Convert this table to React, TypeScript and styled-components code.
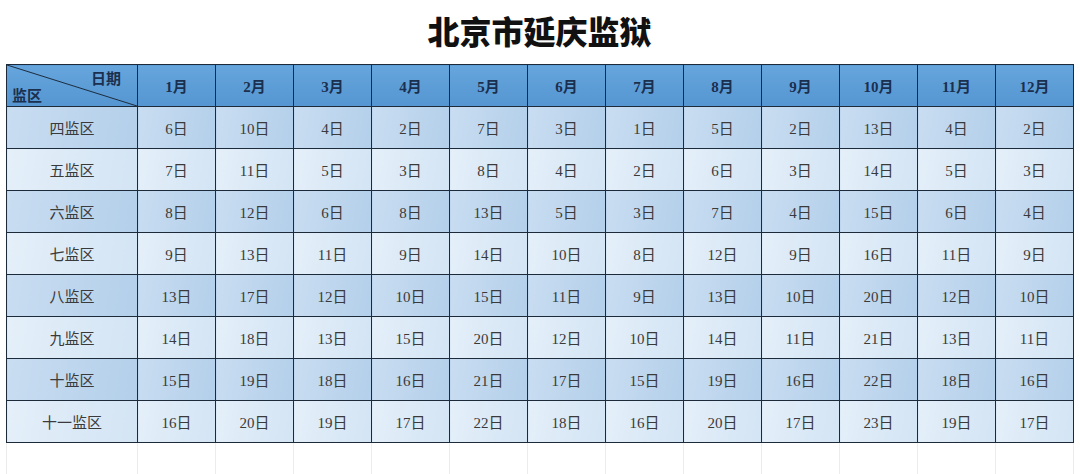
import React from "react";
import styled, { createGlobalStyle, css } from "styled-components";

const GlobalStyle = createGlobalStyle`
  html, body {
    margin: 0;
    padding: 0;
    background: #ffffff;
  }
  body {
    font-family: "Liberation Serif", "Noto Sans CJK SC", serif;
    color: #333;
  }
`;

const months = ["1月", "2月", "3月", "4月", "5月", "6月", "7月", "8月", "9月", "10月", "11月", "12月"];

const rows: { name: string; days: number[] }[] = [
  { name: "四监区", days: [6, 10, 4, 2, 7, 3, 1, 5, 2, 13, 4, 2] },
  { name: "五监区", days: [7, 11, 5, 3, 8, 4, 2, 6, 3, 14, 5, 3] },
  { name: "六监区", days: [8, 12, 6, 8, 13, 5, 3, 7, 4, 15, 6, 4] },
  { name: "七监区", days: [9, 13, 11, 9, 14, 10, 8, 12, 9, 16, 11, 9] },
  { name: "八监区", days: [13, 17, 12, 10, 15, 11, 9, 13, 10, 20, 12, 10] },
  { name: "九监区", days: [14, 18, 13, 15, 20, 12, 10, 14, 11, 21, 13, 11] },
  { name: "十监区", days: [15, 19, 18, 16, 21, 17, 15, 19, 16, 22, 18, 16] },
  { name: "十一监区", days: [16, 20, 19, 17, 22, 18, 16, 20, 17, 23, 19, 17] },
];

const Page = styled.div`
  width: 1080px;
  height: 474px;
  overflow: hidden;
  padding: 0 7px 0 6px;
  box-sizing: border-box;
`;

const Title = styled.h1`
  margin: 0;
  height: 64px;
  display: flex;
  align-items: center;
  justify-content: center;
  padding-bottom: 4px;
  box-sizing: border-box;
  font-family: "Liberation Serif", "Noto Sans CJK SC", serif;
  font-size: 32px;
  font-weight: 900;
  color: #111;
  letter-spacing: 0px;
`;

const Table = styled.table`
  width: 1067px;
  border-collapse: collapse;
  table-layout: fixed;
`;

const cellBase = css`
  height: 42px;
  padding: 0;
  text-align: center;
  vertical-align: middle;
  box-sizing: border-box;
  border: 1px solid #1c2a3a;
`;

const HeadCell = styled.th`
  ${cellBase}
  background: linear-gradient(180deg, #66a5dc 0%, #5596d2 100%);
  color: #1b2f4e;
  font-size: 15px;
  font-weight: 700;
`;

const Corner = styled.th`
  ${cellBase}
  position: relative;
  background: linear-gradient(180deg, #66a5dc 0%, #5596d2 100%);
  color: #1b2f4e;
  font-size: 15px;
  font-weight: 700;
`;

const Diagonal = styled.svg`
  position: absolute;
  inset: 0;
  width: 100%;
  height: 100%;
`;

const CornerTop = styled.span`
  position: absolute;
  top: 2px;
  right: 16px;
`;

const CornerBottom = styled.span`
  position: absolute;
  left: 5px;
  bottom: 1px;
`;

const Cell = styled.td<{ $dark: boolean }>`
  ${cellBase}
  font-size: 15px;
  color: #3a3a3a;
  background: ${(p) =>
    p.$dark
      ? "linear-gradient(100deg, #c9ddf1 0%, #b3cfea 100%)"
      : "linear-gradient(100deg, #e4eff9 0%, #d3e4f4 100%)"};
`;

const BlankCell = styled.td`
  height: 40px;
  padding: 0;
  border-left: 1px solid #ececec;
  border-right: 1px solid #ececec;
  border-top: 1px solid #1c2a3a;
`;

export default function App() {
  return (
    <>
      <GlobalStyle />
      <Page>
        <Title>北京市延庆监狱</Title>
        <Table>
          <colgroup>
            <col style={{ width: 131 }} />
            {months.map((m) => (
              <col key={m} style={{ width: 78 }} />
            ))}
          </colgroup>
          <thead>
            <tr>
              <Corner>
                <Diagonal viewBox="0 0 131 42" preserveAspectRatio="none">
                  <line x1="0" y1="0" x2="131" y2="42" stroke="#1c2a3a" strokeWidth="1" />
                </Diagonal>
                <CornerTop>日期</CornerTop>
                <CornerBottom>监区</CornerBottom>
              </Corner>
              {months.map((m) => (
                <HeadCell key={m}>{m}</HeadCell>
              ))}
            </tr>
          </thead>
          <tbody>
            {rows.map((r, i) => (
              <tr key={r.name}>
                <Cell $dark={i % 2 === 0}>{r.name}</Cell>
                {r.days.map((d, j) => (
                  <Cell key={j} $dark={i % 2 === 0}>
                    {d}日
                  </Cell>
                ))}
              </tr>
            ))}
            <tr>
              <BlankCell />
              {months.map((m) => (
                <BlankCell key={m} />
              ))}
            </tr>
          </tbody>
        </Table>
      </Page>
    </>
  );
}
